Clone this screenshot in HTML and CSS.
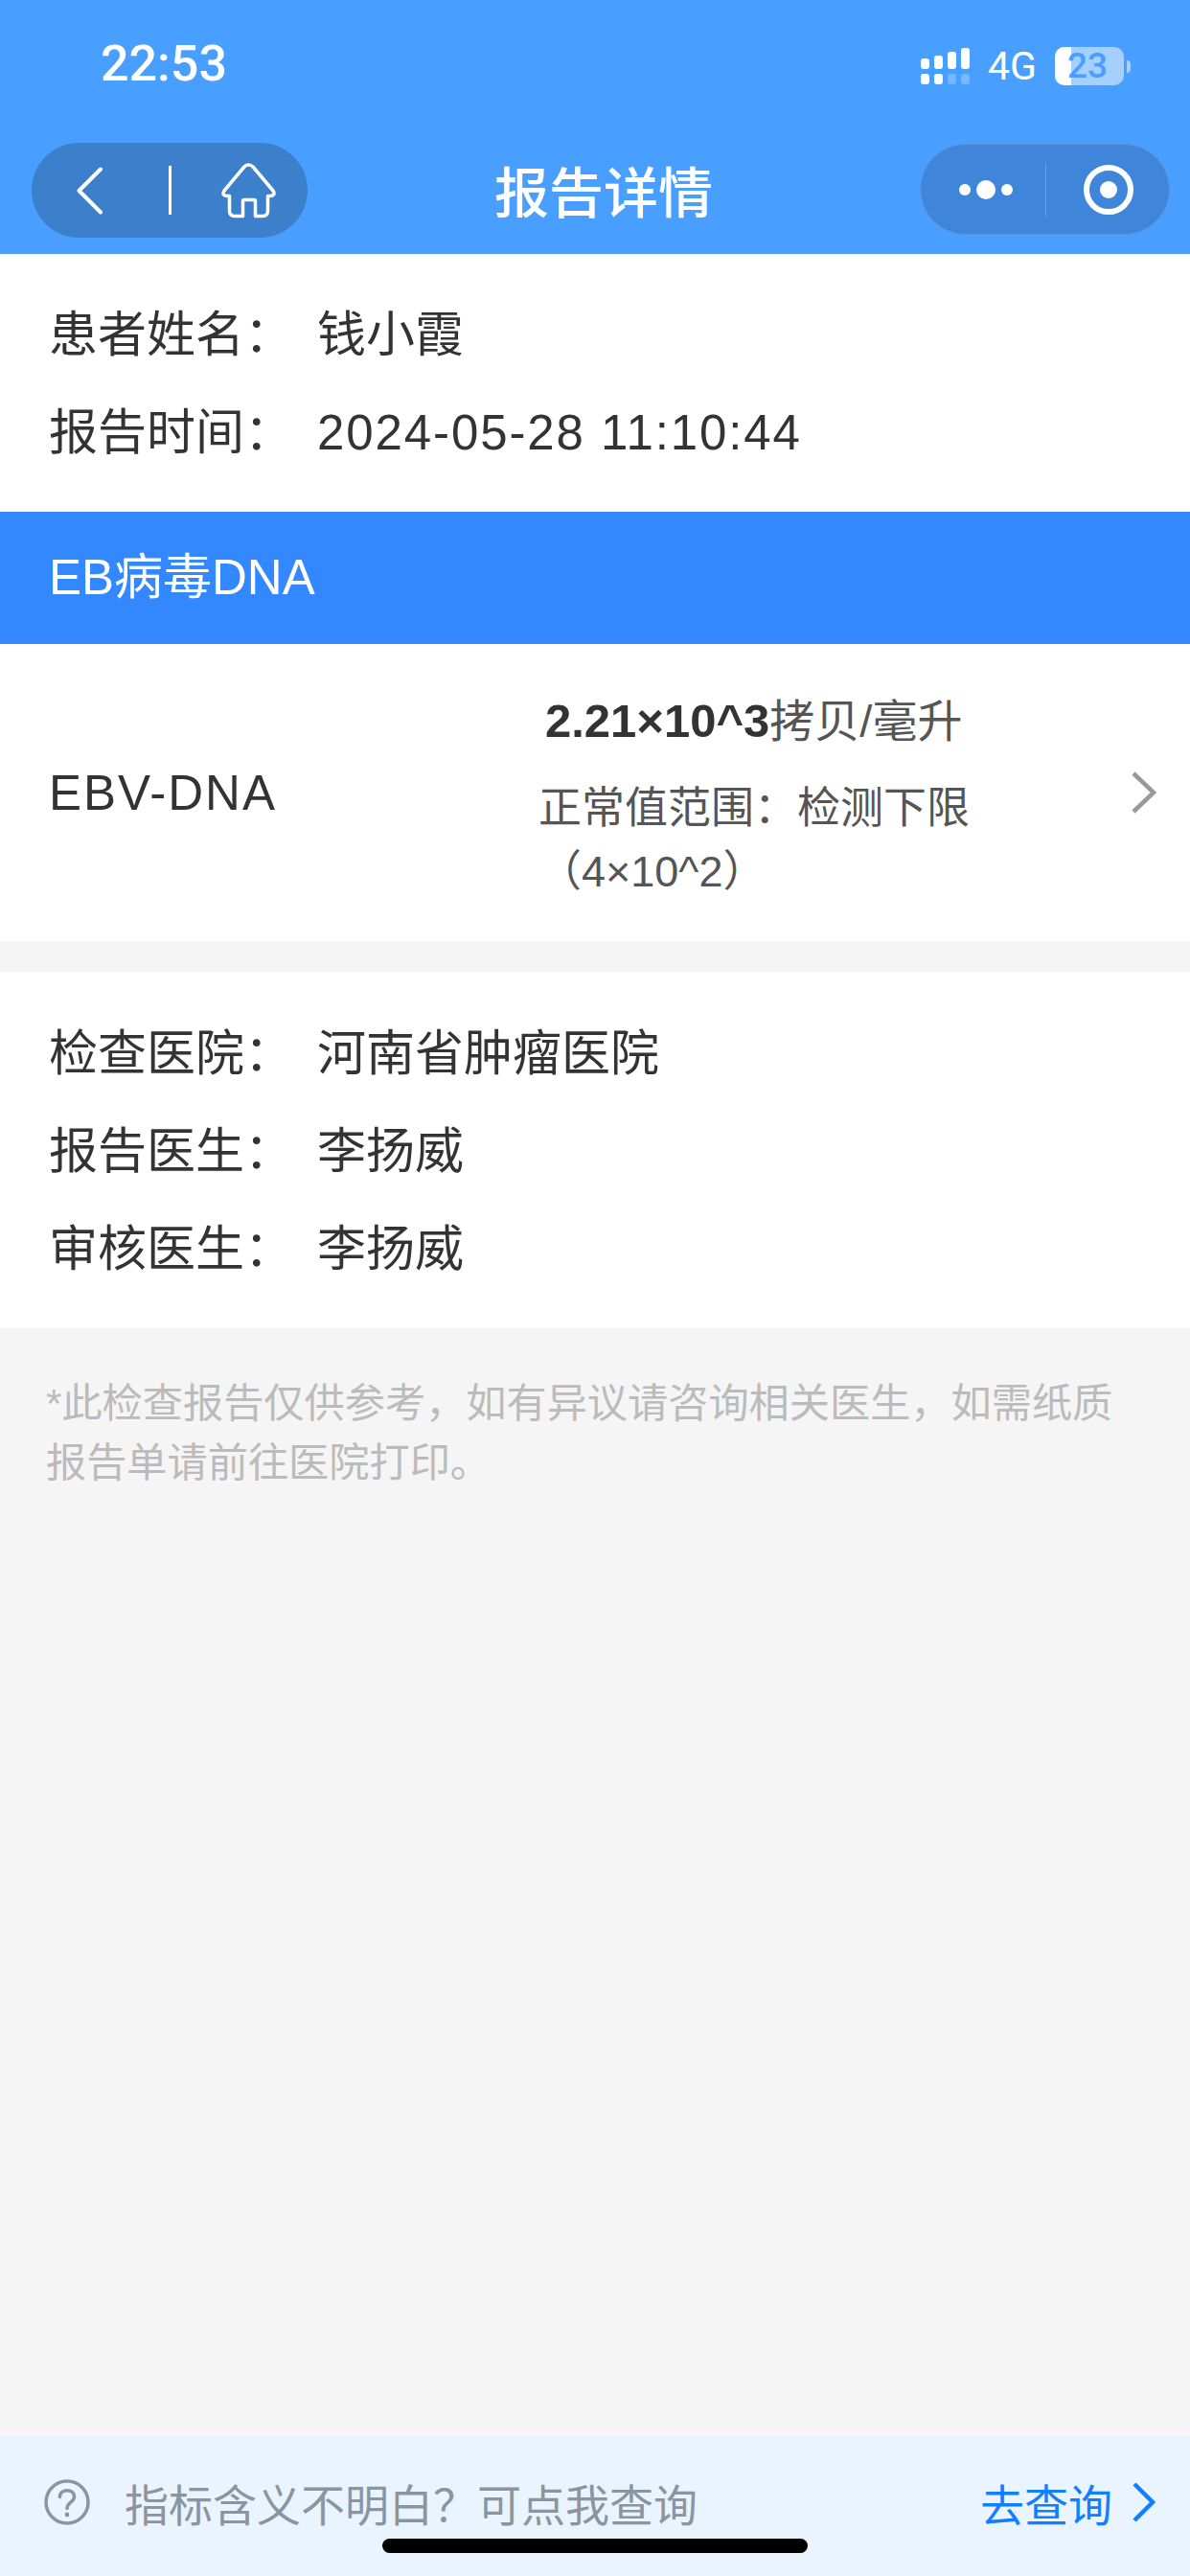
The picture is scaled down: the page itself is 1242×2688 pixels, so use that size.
FILE: index.html
```html
<!DOCTYPE html>
<html lang="zh-CN">
<head>
  <meta charset="UTF-8" />
  <meta name="viewport" content="width=device-width, initial-scale=1.0"/>
  <title>报告详情</title>
  <link rel="stylesheet" href="styles.css">
</head>
<body>
  <div class="page">
    <header class="header">
      <div class="status">
        <span class="time">22:53</span>
        <div class="status-right">
          <svg class="signal" width="51" height="38" viewBox="0 0 51 38">
            <g fill="#fff">
              <rect x="0" y="11" width="9" height="11" rx="3"/>
              <rect x="14" y="8" width="9" height="14" rx="3"/>
              <rect x="28" y="4" width="9" height="18" rx="3"/>
              <rect x="42" y="0" width="9" height="22" rx="3"/>
              <rect x="0" y="27" width="9" height="11" rx="3"/>
              <rect x="14" y="27" width="9" height="11" rx="3"/>
            </g>
            <g fill="#fff" opacity="0.25">
              <rect x="28" y="27" width="9" height="11" rx="3"/>
              <rect x="42" y="27" width="9" height="11" rx="3"/>
            </g>
          </svg>
          <span class="net">4G</span>
          <div class="battery">
            <div class="battery-body">
              <div class="battery-level"></div>
              <span class="battery-text">23</span>
            </div>
            <div class="battery-nub"></div>
          </div>
        </div>
      </div>
      <nav class="nav">
        <div class="pill pill-left">
          <svg width="28" height="50" viewBox="0 0 28 50" fill="none" stroke="#fff" stroke-width="4" stroke-linecap="round" stroke-linejoin="round">
            <path d="M25 2.500 L2.500 25 L25 47.500"/>
          </svg>
          <div class="pill-line"></div>
          <svg width="57" height="58" viewBox="0 0 57 58" fill="none" stroke="#fff" stroke-width="3.500" stroke-linejoin="round">
            <path d="M24 4 Q28.500 0 33 4 L54 29 Q57 34 51 34.500 L48.500 34.500 L48.500 50 Q48.500 55.500 43 55.500 L35.500 55.500 L35.500 40 Q35.500 38.500 34 38.500 L24 38.500 Q22.500 38.500 22.500 40 L22.500 55.500 L14 55.500 Q8.500 55.500 8.500 50 L8.500 34.500 L6 34.500 Q0 34 3 29 Z"/>
          </svg>
        </div>
        <h1 class="title">报告详情</h1>
        <div class="pill pill-right">
          <svg width="56" height="20" viewBox="0 0 56 20" fill="#fff">
            <circle cx="6" cy="10" r="6"/>
            <circle cx="28" cy="10" r="10"/>
            <circle cx="50" cy="10" r="6"/>
          </svg>
          <div class="pill-line pill-line-thin"></div>
          <svg width="52" height="52" viewBox="0 0 52 52" fill="none">
            <circle cx="26" cy="26" r="23" stroke="#fff" stroke-width="6"/>
            <circle cx="26" cy="26" r="9" fill="#fff"/>
          </svg>
        </div>
      </nav>
    </header>

    <section class="info info-top">
      <div class="info-row"><span class="info-label">患者姓名：</span><span>钱小霞</span></div>
      <div class="info-row"><span class="info-label">报告时间：</span><span class="date">2024-05-28 11:10:44</span></div>
    </section>

    <div class="banner">EB病毒DNA</div>

    <section class="result">
      <span class="result-name">EBV-DNA</span>
      <div class="result-value">
        <div class="result-main"><b>2.21×10^3</b>拷贝/毫升</div>
        <div class="result-range">正常值范围：检测下限（4×10^2）</div>
      </div>
      <svg class="result-arrow" width="27" height="44" viewBox="0 0 27 44" fill="none" stroke="#999" stroke-width="4.500">
        <path d="M3 2 L24 22 L3 42"/>
      </svg>
    </section>

    <section class="info info-bottom">
      <div class="info-row"><span class="info-label">检查医院：</span><span>河南省肿瘤医院</span></div>
      <div class="info-row"><span class="info-label">报告医生：</span><span>李扬威</span></div>
      <div class="info-row"><span class="info-label">审核医生：</span><span>李扬威</span></div>
    </section>

    <p class="note">*此检查报告仅供参考，如有异议请咨询相关医生，如需纸质报告单请前往医院打印。</p>

    <footer class="footer">
      <div class="footer-left">
        <svg width="48" height="48" viewBox="0 0 48 48" fill="none">
          <circle cx="24" cy="24" r="22" stroke="#8a959e" stroke-width="3.500"/>
          <path d="M16.500 18.500 C16.500 9.500 31.500 9.500 31.500 18.500 C31.500 24 24 24 24 30.500" stroke="#8a959e" stroke-width="3.500" stroke-linecap="round"/>
          <circle cx="24" cy="37" r="2.400" fill="#8a959e"/>
        </svg>
        <span>指标含义不明白？可点我查询</span>
      </div>
      <div class="footer-link">
        <span>去查询</span>
        <svg width="24" height="42" viewBox="0 0 24 42" fill="none" stroke="#1080ff" stroke-width="4.500">
          <path d="M2 2 L21 21 L2 40"/>
        </svg>
      </div>
    </footer>

    <div class="home-bar"></div>
  </div>
</body>
</html>
```

FILE: styles.css
```css
* {
  box-sizing: border-box;
}

body {
  margin: 0;
  font-family: "Liberation Sans", "Noto Sans CJK SC", sans-serif;
  color: #333;
}

.page {
  position: relative;
  width: 1242px;
  height: 2688px;
  display: flex;
  flex-direction: column;
  background: #f5f5f5;
  overflow: hidden;
}

.header {
  height: 265px;
  background: #499fff;
  color: #fff;
}

.status {
  height: 149px;
  padding: 0 62px 0 105px;
  display: flex;
  justify-content: space-between;
  align-items: flex-start;
}

.time {
  margin-top: 37px;
  font-family: Roboto, sans-serif;
  font-size: 52px;
  line-height: 60px;
  font-weight: 500;
}

.status-right {
  margin-top: 49px;
  display: flex;
  align-items: center;
  gap: 19px;
}

.net {
  font-family: Roboto, sans-serif;
  font-size: 41px;
  line-height: 40px;
}

.battery {
  display: flex;
  align-items: center;
  gap: 3px;
}

.battery-body {
  position: relative;
  width: 72px;
  height: 40px;
  border-radius: 10px;
  background: rgba(255, 255, 255, 0.5);
}

.battery-level {
  width: 17px;
  height: 100%;
  border-radius: 10px 0 0 10px;
  background: #fff;
}

.battery-text {
  position: absolute;
  top: 0;
  left: 13px;
  font-family: Roboto, sans-serif;
  font-size: 37px;
  line-height: 40px;
  font-weight: 500;
  color: #499fff;
}

.battery-nub {
  width: 4px;
  height: 13px;
  border-radius: 0 7px 7px 0;
  background: rgba(255, 255, 255, 0.5);
}

.nav {
  padding: 0 21px 0 33px;
  display: flex;
  align-items: flex-start;
}

.pill {
  display: flex;
  align-items: center;
}

.pill-left {
  width: 288px;
  height: 99px;
  border-radius: 50px;
  padding-left: 47px;
  background: #3c7fcb;
}

.pill-left .pill-line {
  margin: 0 52px 0 68px;
}

.pill-right {
  width: 261px;
  height: 95px;
  border-radius: 48px;
  margin: 1px 0 0 auto;
  padding-left: 40px;
  border: 1px solid #5f94d8;
  background: #3f86db;
}

.pill-line {
  width: 3px;
  height: 51px;
  background: #fff;
}

.pill-line-thin {
  width: 1px;
  height: 56px;
  margin: 0 39px 0 34px;
  background: #6e9fdc;
}

.title {
  margin: 18px 0 0 195px;
  font-size: 57px;
  line-height: 70px;
  font-weight: 500;
}

.info {
  background: #fff;
  padding: 34px 51px 31px;
  font-size: 51px;
  line-height: 102px;
}

.info-row {
  display: flex;
}

.info-label {
  width: 280px;
}

.date {
  letter-spacing: 1.900px;
}

.banner {
  height: 138px;
  padding-left: 51px;
  background: #3388ff;
  color: #fff;
  font-size: 51px;
  line-height: 138px;
}

.result {
  height: 310px;
  padding: 0 35px 0 51px;
  margin-bottom: 32px;
  display: flex;
  align-items: center;
  background: #fff;
}

.result-name {
  width: 511px;
  font-size: 51px;
  letter-spacing: 2px;
}

.result-value {
  width: 460px;
  padding-top: 12px;
  font-size: 45px;
  color: #555;
}

.result-main {
  padding-left: 7px;
  margin-bottom: 30px;
  font-size: 47px;
  line-height: 56px;
}

.result-main b {
  font-size: 49px;
  color: #333;
}

.result-range {
  line-height: 66px;
}

.result-arrow {
  margin-left: auto;
}

.info-bottom {
  padding-top: 35px;
}

.note {
  margin: 0;
  padding: 48px 48px 0;
  font-size: 42.200px;
  line-height: 62px;
  color: #bbb;
}

.footer {
  margin-top: auto;
  height: 147px;
  padding: 0 36px 0 46px;
  display: flex;
  justify-content: space-between;
  align-items: flex-start;
  background: #eaf4ff;
}

.footer-left {
  height: 140px;
  display: flex;
  align-items: center;
  gap: 36px;
  font-size: 46px;
  color: #8a959e;
}

.footer-link {
  height: 140px;
  display: flex;
  align-items: center;
  gap: 21px;
  font-size: 46px;
  color: #1080ff;
}

.home-bar {
  position: absolute;
  left: 399px;
  bottom: 24px;
  width: 444px;
  height: 15px;
  border-radius: 8px;
  background: #000;
}
```
